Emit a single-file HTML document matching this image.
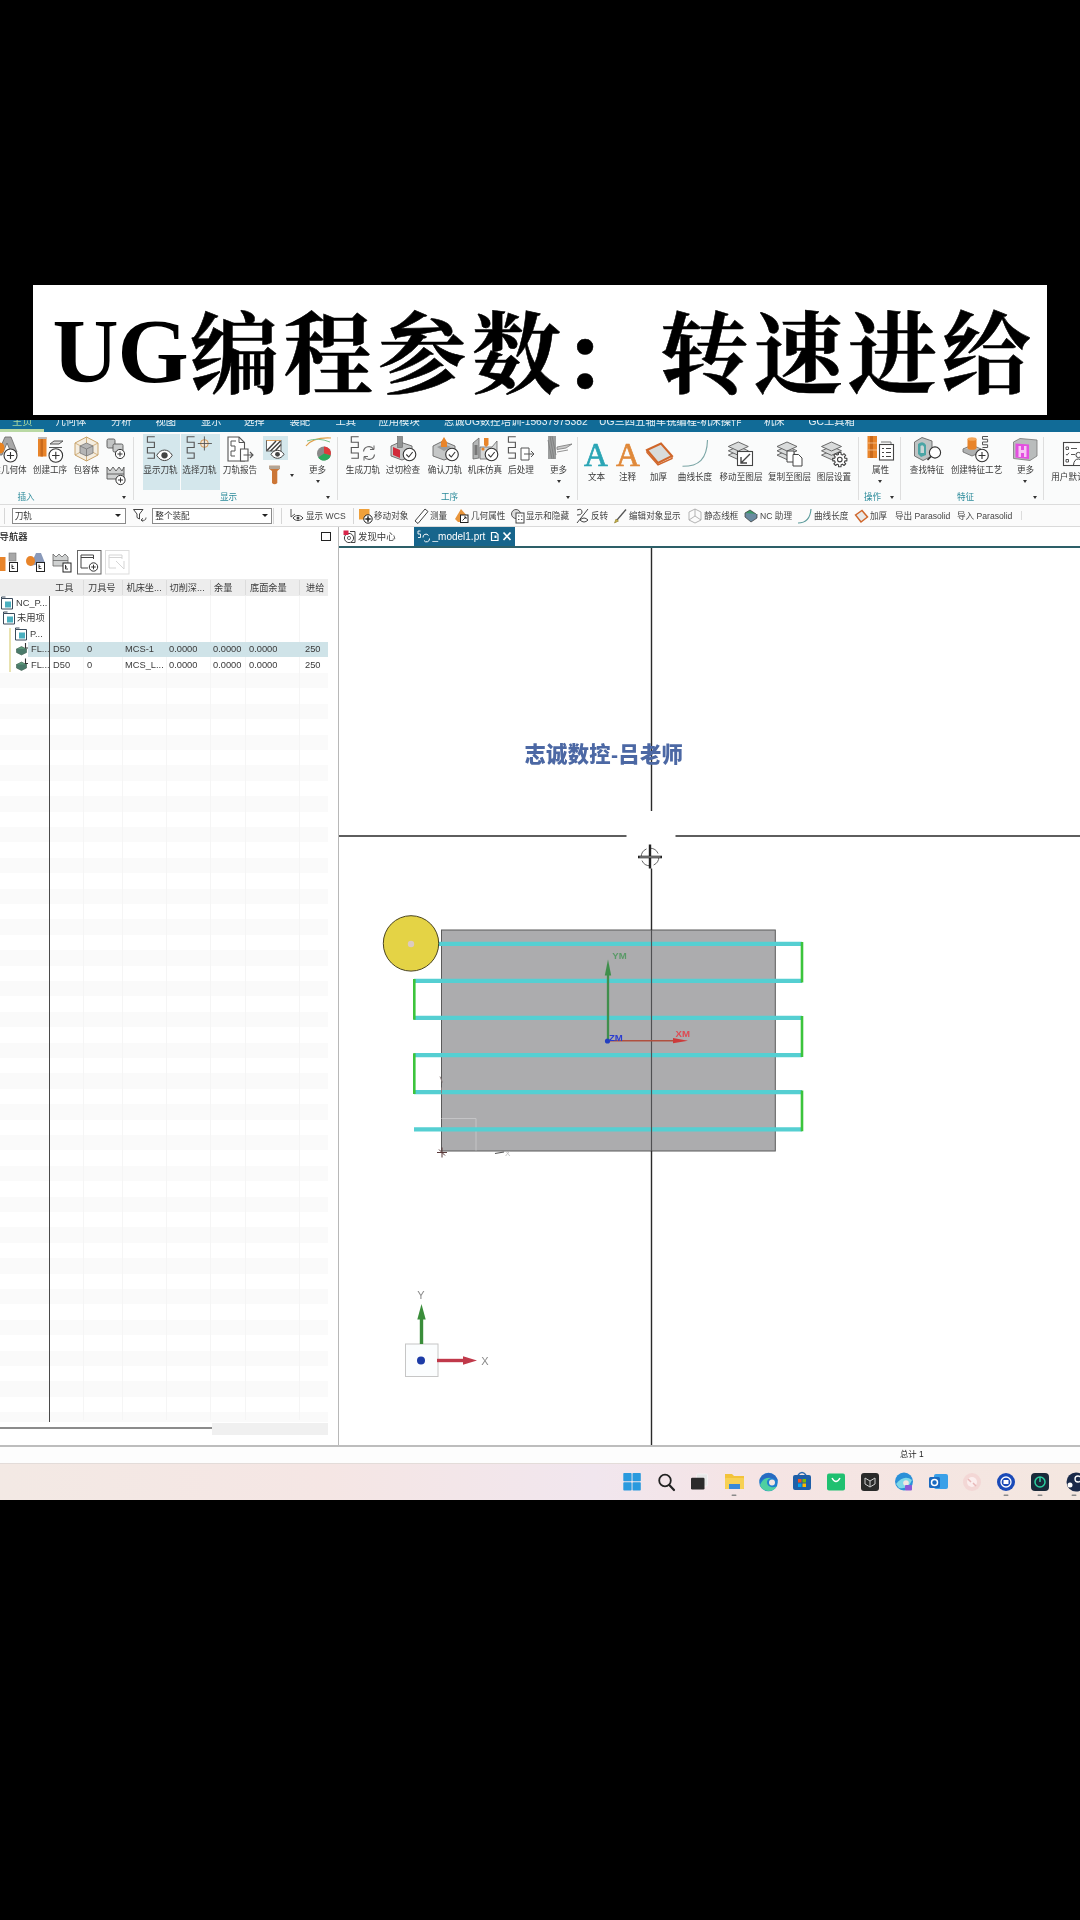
<!DOCTYPE html><html lang="zh"><head><meta charset="utf-8"><title>UG编程参数：转速进给</title><style>
html,body{margin:0;padding:0;background:#000;}
body{width:1080px;height:1920px;position:relative;overflow:hidden;font-family:"Liberation Sans","Noto Sans CJK SC",sans-serif;color:#333;}
.a{position:absolute;white-space:nowrap;}
#title{position:absolute;left:33px;top:285px;width:1014px;height:129.5px;background:#fff;}
#tt{position:absolute;left:0;top:0;white-space:nowrap;color:#000;}
#tt .l{font-family:"Liberation Serif",serif;font-weight:700;}
#tt .c{font-family:"Noto Serif CJK SC",serif;font-weight:700;-webkit-text-stroke:0.55px #000;}
#ui{position:absolute;left:0;top:420px;width:1080px;height:1080px;background:#fff;overflow:hidden;filter:blur(0.45px);}
#tabs{position:absolute;left:0;top:0;width:1080px;height:12px;background:#116b97;overflow:hidden;}
#tabs span{position:absolute;top:-5.5px;font-size:10.3px;line-height:14px;color:#e8f1f5;white-space:nowrap;}
#ribbon{position:absolute;left:0;top:12px;width:1080px;height:72px;background:#fafbfb;border-bottom:1px solid #dcdcdc;}
.lb{position:absolute;font-size:8.6px;line-height:10px;color:#3a3a3a;white-space:nowrap;transform:translateX(-50%);}
.gl{position:absolute;font-size:8.6px;line-height:10px;color:#2a8a9a;white-space:nowrap;transform:translateX(-50%);}
.sep{position:absolute;width:1px;background:#dedede;}
.arr{position:absolute;width:0;height:0;border-left:2.5px solid transparent;border-right:2.5px solid transparent;border-top:3px solid #333;}
.hl{position:absolute;background:#d4e7ec;}
#tb{position:absolute;left:0;top:85px;width:1080px;height:21px;background:#fbfbfb;border-bottom:1px solid #dadada;}
.tl{position:absolute;font-size:8.6px;line-height:10px;color:#444;white-space:nowrap;top:90.5px;}
.combo{position:absolute;top:2.5px;height:14px;border:1px solid #8a8a8a;background:#fff;font-size:8.6px;line-height:14px;color:#333;padding-left:2px;box-sizing:content-box;}
svg{position:absolute;overflow:visible;}
.nt{position:absolute;font-size:9px;line-height:11px;color:#3a3a3a;white-space:nowrap;}
</style></head><body>
<div id="title"><div id="tt" style="left:19.5px;top:-2.5px;font-size:89px;line-height:129px;letter-spacing:5px"><span class="l" style="font-size:91.5px;letter-spacing:-1px;position:relative;top:-3.2px;margin-right:2px">UG</span><span class="c">编程参数<span style="position:relative;left:-4.5px;top:5px">：</span>转速进给</span></div></div>
<div id="ui">
<div id="tabs">
<div class="a" style="left:0;top:9px;width:44px;height:3px;background:#b9d9a4"></div>
<span style="left:12px;color:#a6d6a0;">主页</span>
<span style="left:55.5px;">几何体</span>
<span style="left:111px;">分析</span>
<span style="left:155.5px;">视图</span>
<span style="left:201px;">显示</span>
<span style="left:244px;">选择</span>
<span style="left:289.5px;">装配</span>
<span style="left:335.5px;">工具</span>
<span style="left:378.5px;">应用模块</span>
<span style="left:444px;">志诚UG数控培训-15637975382</span>
<span style="left:599px;">UG三四五轴车铣编程-机床操作</span>
<span style="left:764px;">机床</span>
<span style="left:808.5px;">GC工具箱</span>
</div>
<div id="ribbon">
<div class="hl" style="left:142.5px;top:2px;width:37.5px;height:56px"></div>
<div class="hl" style="left:181px;top:2px;width:38.5px;height:56px"></div>
<div class="hl" style="left:263px;top:3.5px;width:25px;height:24px"></div>
<div class="sep" style="left:133px;top:5px;height:63px"></div>
<div class="sep" style="left:337px;top:5px;height:63px"></div>
<div class="sep" style="left:577px;top:5px;height:63px"></div>
<div class="sep" style="left:858px;top:5px;height:63px"></div>
<div class="sep" style="left:900px;top:5px;height:63px"></div>
<div class="sep" style="left:1043px;top:5px;height:63px"></div>
<div class="lb" style="left:9.5px;top:33px">建几何体</div>
<div class="lb" style="left:50px;top:33px">创建工序</div>
<div class="lb" style="left:86.5px;top:33px">包容体</div>
<div class="lb" style="left:160.5px;top:33px">显示刀轨</div>
<div class="lb" style="left:199.5px;top:33px">选择刀轨</div>
<div class="lb" style="left:240px;top:33px">刀轨报告</div>
<div class="lb" style="left:317.5px;top:33px">更多</div>
<div class="lb" style="left:363px;top:33px">生成刀轨</div>
<div class="lb" style="left:403px;top:33px">过切检查</div>
<div class="lb" style="left:445px;top:33px">确认刀轨</div>
<div class="lb" style="left:485px;top:33px">机床仿真</div>
<div class="lb" style="left:521px;top:33px">后处理</div>
<div class="lb" style="left:558.5px;top:33px">更多</div>
<div class="lb" style="left:596.5px;top:39.5px">文本</div>
<div class="lb" style="left:627.5px;top:39.5px">注释</div>
<div class="lb" style="left:658.5px;top:39.5px">加厚</div>
<div class="lb" style="left:695px;top:39.5px">曲线长度</div>
<div class="lb" style="left:741px;top:39.5px">移动至图层</div>
<div class="lb" style="left:789.5px;top:39.5px">复制至图层</div>
<div class="lb" style="left:834px;top:39.5px">图层设置</div>
<div class="lb" style="left:880.5px;top:33px">属性</div>
<div class="lb" style="left:927px;top:33px">查找特征</div>
<div class="lb" style="left:976.5px;top:33px">创建特征工艺</div>
<div class="lb" style="left:1025.5px;top:33px">更多</div>
<div class="lb" style="left:1077px;top:39.5px">用户默认设置</div>
<div class="gl" style="left:26px;top:60px">插入</div>
<div class="gl" style="left:228.5px;top:60px">显示</div>
<div class="gl" style="left:449.5px;top:60px">工序</div>
<div class="gl" style="left:872.5px;top:60px">操作</div>
<div class="gl" style="left:965.5px;top:60px">特征</div>
<div class="arr" style="left:121.5px;top:63.5px"></div>
<div class="arr" style="left:289.5px;top:41.5px"></div>
<div class="arr" style="left:315.5px;top:48.0px"></div>
<div class="arr" style="left:325.5px;top:63.5px"></div>
<div class="arr" style="left:556.5px;top:48.0px"></div>
<div class="arr" style="left:565.5px;top:63.5px"></div>
<div class="arr" style="left:878.0px;top:48.0px"></div>
<div class="arr" style="left:889.5px;top:63.5px"></div>
<div class="arr" style="left:1023.0px;top:48.0px"></div>
<div class="arr" style="left:1032.5px;top:63.5px"></div>
<svg style="left:0;top:0" width="1080" height="72" viewBox="0 432 1080 72"><path d="M-3,455 L5,437 L11,437 L17,452 L12,455 L7,443 L2,455 Z" fill="#a8a8a8" stroke="#666" stroke-width="0.8"/><ellipse cx="0" cy="448" rx="4.5" ry="5.5" fill="#e98320"/><circle cx="10.5" cy="455.5" r="6.5" fill="#fff" stroke="#333" stroke-width="1.1"/><path d="M6.925,455.5 H14.075 M10.5,451.925 V459.075" stroke="#333" stroke-width="1.1" fill="none"/><rect x="38" y="437" width="8.5" height="19.5" fill="#e8842a"/><rect x="40.5" y="437" width="2.5" height="19.5" fill="#c96a1c"/><rect x="38" y="437" width="8.5" height="2" fill="#b9b9b9"/><path d="M50,444 L54,441 L63,441 L59,444 Z M49,447.5 L62,447.5" fill="#ddd" stroke="#555" stroke-width="1"/><circle cx="55.8" cy="455.5" r="6.8" fill="#fff" stroke="#333" stroke-width="1.1"/><path d="M52.059999999999995,455.5 H59.54 M55.8,451.76 V459.24" stroke="#333" stroke-width="1.1" fill="none"/><path d="M86.5,437 L98,443 L98,455 L86.5,461 L75,455 L75,443 Z" fill="#f4ede0" stroke="#c9a36a" stroke-width="1"/><path d="M86.5,437 V461 M75,443 L98,455 M98,443 L75,455" stroke="#c9a36a" stroke-width="0.8" fill="none"/><path d="M80,446 L86.5,443 L93,446 L93,453 L86.5,456 L80,453 Z" fill="#b5b5b5" stroke="#777" stroke-width="0.8"/><path d="M80,446 L86.5,449 L93,446 M86.5,449 V456" stroke="#777" stroke-width="0.8" fill="none"/><rect x="107" y="439" width="8" height="9" rx="1.5" fill="#c2c4c4" stroke="#555" stroke-width="0.9"/><rect x="113" y="444" width="10" height="8" rx="1.5" fill="#c9cbcb" stroke="#555" stroke-width="0.9"/><circle cx="120" cy="454" r="4.6" fill="#fff" stroke="#333" stroke-width="1"/><path d="M117.47,454 H122.53 M120,451.47 V456.53" stroke="#333" stroke-width="1" fill="none"/><path d="M107,467 L110,471 L113,467 L116,471 L119,467 L122,471 L124,467 V479 H107 Z" fill="#cfd1d1" stroke="#555" stroke-width="0.9"/><path d="M107,474 H124" stroke="#555" stroke-width="0.9"/><circle cx="120.5" cy="480" r="4.6" fill="#fff" stroke="#333" stroke-width="1"/><path d="M117.97,480 H123.03 M120.5,477.47 V482.53" stroke="#333" stroke-width="1" fill="none"/><path d="M154.8,436.8 H147.4 V442.175 H154.4 V447.55 H147.4 V452.925 H154.4 V458.3 H147.4" stroke="#555" stroke-width="1.1" fill="none"/><path d="M156.75,455.3 C160.625,448.29650000000004 168.375,448.29650000000004 172.25,455.3 C168.375,462.3035 160.625,462.3035 156.75,455.3 Z" fill="#fff" stroke="#444" stroke-width="1"/><circle cx="164.5" cy="455.3" r="3.15" fill="#444"/><path d="M194.6,436.8 H187.2 V442.175 H194.2 V447.55 H187.2 V452.925 H194.2 V458.3 H187.2" stroke="#555" stroke-width="1.1" fill="none"/><circle cx="204.4" cy="443.5" r="3.9" fill="#f3e6d6" stroke="#d49a5a" stroke-width="1"/><path d="M197.800,443.5 H211.900 M204.4,436.400 V450.500" stroke="#555" stroke-width="0.9"/><path d="M228,437 H239 L244.5,442.5 V461 H228 Z" fill="#fff" stroke="#555" stroke-width="1.1"/><path d="M239,437 V442.5 H244.5" fill="none" stroke="#555" stroke-width="1"/><path d="M236,441 H231 V446 H235 V451 H231 V456 H235" fill="none" stroke="#555" stroke-width="1"/><path d="M240.500,449 H248 V461 H240.500 Z" fill="#fff" stroke="#555" stroke-width="1.1"/><path d="M243.500,455 H253 M250,452 L253,455 L250,458" stroke="#555" stroke-width="1.1" fill="none"/><rect x="266.5" y="440.5" width="14.5" height="10.5" fill="#fff" stroke="#555" stroke-width="0.9"/><path d="M266.5,440.5 H281" stroke="#d9a060" stroke-width="1"/><path d="M267,450.500 L276,441 M270.500,451 L280.500,441 M275,451 L281,444.500" stroke="#444" stroke-width="1.5"/><path d="M271.0,454.3 C274.25,448.964 280.75,448.964 284.0,454.3 C280.75,459.636 274.25,459.636 271.0,454.3 Z" fill="#fff" stroke="#444" stroke-width="1"/><circle cx="277.5" cy="454.3" r="2.4" fill="#444"/><path d="M269,465.800 H280 V468.800 L277.300,471 V483 Q274.650,485.500 272,483 V471 L269,468.800 Z" fill="#cc7636"/><rect x="269" y="465.800" width="11" height="3.200" rx="0.800" fill="#b3a596"/><path d="M306,446 Q313,437 331,438" fill="none" stroke="#e0a04a" stroke-width="1.2"/><path d="M307,441 Q318,437 330,442" fill="none" stroke="#7cc08a" stroke-width="1"/><circle cx="324" cy="453.5" r="7" fill="#8a8a8a"/><path d="M324,453.5 L324,446.5 A7,7 0 0 1 330.700,455.600 Z" fill="#e03a3a"/><path d="M324,453.5 L330.700,455.600 A7,7 0 0 1 318.200,457.500 Z" fill="#2aa85a"/><path d="M358.7,436.8 H351.3 V442.175 H358.3 V447.55 H351.3 V452.925 H358.3 V458.3 H351.3" stroke="#555" stroke-width="1.1" fill="none"/><g transform="translate(2,-1.500)"><path d="M361.500,453 A5.500,5.500 0 0 1 371.500,450.5 M372.500,456 A5.500,5.500 0 0 1 362.500,458.5" fill="none" stroke="#666" stroke-width="1.2"/><path d="M372,447 V451 H368 M362,462 V458 H366" fill="none" stroke="#666" stroke-width="1"/></g><path d="M391,446 L400,442 L412,446 L412,456 L402,460 L391,456 Z" fill="#c5c7c7" stroke="#666" stroke-width="0.9"/><path d="M393,447 L400,450 V458 L393,455 Z" fill="#d12a3a"/><rect x="397.5" y="436.5" width="5" height="11" fill="#8f9191" stroke="#666" stroke-width="0.6"/><circle cx="409.5" cy="454.5" r="6.3" fill="#fff" stroke="#333" stroke-width="1.1"/><path d="M406.35,454.5 L408.744,457.02 L412.65,451.98" stroke="#333" stroke-width="1.1" fill="none"/><path d="M433,446 L443,441 L455,446 L455,456 L444,460 L433,456 Z" fill="#c5c7c7" stroke="#666" stroke-width="0.9"/><path d="M437,447 L444,444 L451,447 L444,451 Z" fill="#9a9c9c"/><path d="M441,442 L444,437 L447,442 V447 H441 Z" fill="#e8842a"/><circle cx="452" cy="454.5" r="6.3" fill="#fff" stroke="#333" stroke-width="1.1"/><path d="M448.85,454.5 L451.244,457.02 L455.15,451.98" stroke="#333" stroke-width="1.1" fill="none"/><path d="M473,443 L479,438 L479,458 L473,459 Z" fill="#b5b7b7" stroke="#666" stroke-width="0.8"/><path d="M480,447 H492 L497,441 V456 L492,459 H480 Z" fill="#d4d6d6" stroke="#666" stroke-width="0.8"/><rect x="474.5" y="445" width="3" height="10" fill="#777"/><path d="M484,438 H488.5 V445 L486,447 L484,445 Z" fill="#e8842a"/><circle cx="483" cy="449" r="1.6" fill="#e8842a"/><circle cx="491.5" cy="454.5" r="6.3" fill="#fff" stroke="#333" stroke-width="1.1"/><path d="M488.35,454.5 L490.744,457.02 L494.65,451.98" stroke="#333" stroke-width="1.1" fill="none"/><path d="M515.8,436.8 H508.4 V442.175 H515.4 V447.55 H508.4 V452.925 H515.4 V458.3 H508.4" stroke="#555" stroke-width="1.1" fill="none"/><path d="M521,448 H529 V460 H521 Z" fill="#fff" stroke="#555" stroke-width="1"/><path d="M524,454 H534 M531,451 L534,454 L531,457" fill="none" stroke="#555" stroke-width="1"/><rect x="548" y="436" width="8" height="23" fill="#9b9d9d"/><path d="M550,436 L554,459 M548,440 L552,459 M552,436 L556,455" stroke="#777" stroke-width="0.7"/><path d="M557,447 L572,444 L566,448 L557,449.5 Z M557,452 L568,450" fill="#ccc" stroke="#777" stroke-width="0.8"/><text x="596" y="465.5" font-family="Liberation Serif,serif" font-size="33" fill="#2aa5b5" stroke="#2aa5b5" stroke-width="0.7" text-anchor="middle">A</text><text x="628" y="465.5" font-family="Liberation Serif,serif" font-size="33" fill="#e0893a" stroke="#e0893a" stroke-width="0.7" text-anchor="middle">A</text><path d="M647,450 L661,443.5 L672,456 L658,463 Z" fill="#d8dcdc" stroke="#d0662a" stroke-width="2"/><path d="M647,450 L647,452.5 L658,465 L672,458.5 V456" fill="none" stroke="#d0662a" stroke-width="1.4"/><path d="M682.500,466.3 C699,466.3 707,459 707.5,440" fill="none" stroke="#7aa5a5" stroke-width="1.1"/><path d="M728.3,455.1 L738.3,450.6 L748.3,455.1 L738.3,459.6 Z" fill="#d9dbdb" stroke="#5a5a5a" stroke-width="0.9"/><path d="M728.3,450.8 L738.3,446.3 L748.3,450.8 L738.3,455.3 Z" fill="#d9dbdb" stroke="#5a5a5a" stroke-width="0.9"/><path d="M728.3,446.5 L738.3,442.0 L748.3,446.5 L738.3,451.0 Z" fill="#d9dbdb" stroke="#5a5a5a" stroke-width="0.9"/><rect x="737.5" y="451.5" width="15" height="14" fill="#fff" stroke="#444" stroke-width="1.1"/><path d="M750,454 L741,463 M741,457 V463 H747" fill="none" stroke="#444" stroke-width="1.4"/><path d="M777,455.1 L787.0,450.6 L797,455.1 L787.0,459.6 Z" fill="#d9dbdb" stroke="#5a5a5a" stroke-width="0.9"/><path d="M777,450.8 L787.0,446.3 L797,450.8 L787.0,455.3 Z" fill="#d9dbdb" stroke="#5a5a5a" stroke-width="0.9"/><path d="M777,446.5 L787.0,442.0 L797,446.5 L787.0,451.0 Z" fill="#d9dbdb" stroke="#5a5a5a" stroke-width="0.9"/><path d="M787,451 H794 V462 H787 Z" fill="#fff" stroke="#444" stroke-width="1"/><path d="M793,454.5 H798.5 L802,458 V466 H793 Z" fill="#fff" stroke="#444" stroke-width="1"/><path d="M821.5,455.1 L831.5,450.6 L841.5,455.1 L831.5,459.6 Z" fill="#d9dbdb" stroke="#5a5a5a" stroke-width="0.9"/><path d="M821.5,450.8 L831.5,446.3 L841.5,450.8 L831.5,455.3 Z" fill="#d9dbdb" stroke="#5a5a5a" stroke-width="0.9"/><path d="M821.5,446.5 L831.5,442.0 L841.5,446.5 L831.5,451.0 Z" fill="#d9dbdb" stroke="#5a5a5a" stroke-width="0.9"/><path d="M846.89,458.36 L846.89,460.84 L844.93,460.92 L844.36,462.30 L845.69,463.74 L843.94,465.49 L842.50,464.16 L841.12,464.73 L841.04,466.69 L838.56,466.69 L838.48,464.73 L837.10,464.16 L835.66,465.49 L833.91,463.74 L835.24,462.30 L834.67,460.92 L832.71,460.84 L832.71,458.36 L834.67,458.28 L835.24,456.90 L833.91,455.46 L835.66,453.71 L837.10,455.04 L838.48,454.47 L838.56,452.51 L841.04,452.51 L841.12,454.47 L842.50,455.04 L843.94,453.71 L845.69,455.46 L844.36,456.90 L844.93,458.28 Z" fill="#fff" stroke="#444" stroke-width="1.1" stroke-linejoin="round"/><circle cx="839.8" cy="459.6" r="2.3" fill="#fff" stroke="#444" stroke-width="1.1"/><rect x="867.5" y="436" width="9.5" height="22" fill="#e8842a"/><rect x="870" y="436" width="3" height="22" fill="#c96a1c"/><path d="M867.5,443 H877 M867.5,450 H877" stroke="#f6c79a" stroke-width="0.8"/><path d="M881,442 H891 V445" fill="none" stroke="#666" stroke-width="0.9"/><rect x="879.5" y="444.5" width="14" height="15.5" fill="#fff" stroke="#444" stroke-width="1.1"/><path d="M882,448.5 H884 M886,448.5 H891 M882,452.5 H884 M886,452.5 H891 M882,456.5 H884 M886,456.5 H891" stroke="#444" stroke-width="1.1"/><path d="M914.5,442 L922,437.5 L932,441 L932,456 L923,460.5 L914.5,456 Z" fill="#bfc3c3" stroke="#666" stroke-width="0.9"/><path d="M918,444 Q923,440 926,445 V455 L921,457 L918,454 Z" fill="#4aa5a5"/><path d="M920.5,446 Q923,444 924,447 V453 H920.5 Z" fill="#c9d5d5"/><circle cx="935" cy="452.5" r="5.6" fill="#fff" stroke="#333" stroke-width="1.1"/><path d="M931,456.5 L927.5,460" stroke="#333" stroke-width="1.6"/><path d="M963,449 L972,445 L981,449 L972,453 Z" fill="#c5c7c7" stroke="#666" stroke-width="0.8"/><path d="M963,449 V452 L972,456 L981,452 V449" fill="#aeb0b0" stroke="#666" stroke-width="0.8"/><rect x="967.5" y="439" width="9" height="9" fill="#e8842a"/><ellipse cx="972" cy="439" rx="4.5" ry="1.8" fill="#f2a65a"/><ellipse cx="972" cy="448" rx="4.5" ry="1.8" fill="#e8842a"/><path d="M988.0,436.5 H982.5 V439.25 H987.6 V442.0 H982.5 V444.75 H987.6 V447.5 H982.5" stroke="#555" stroke-width="1" fill="none"/><circle cx="982" cy="455.5" r="6.3" fill="#fff" stroke="#333" stroke-width="1.1"/><path d="M978.535,455.5 H985.465 M982,452.035 V458.965" stroke="#333" stroke-width="1.1" fill="none"/><path d="M1013.5,442 L1020,438.5 L1037,440 L1037,456 L1030,460.5 L1013.5,458.5 Z" fill="#b9bcbc" stroke="#777" stroke-width="0.8"/><path d="M1015.5,443.5 L1029,444.5 V459 L1015.5,457.5 Z" fill="#e34fe0"/><path d="M1018.5,446 H1021 V450 H1024 V446 H1026.5 V457 H1024 V453 H1021 V457 H1018.5 Z" fill="#f7c6f5"/><rect x="1063.5" y="442.5" width="20" height="23" fill="#fff" stroke="#444" stroke-width="1.1"/><path d="M1066,447 h2.5 v2.5 h-2.5 Z M1071,448.5 H1077 M1066,454 l1,1.2 l2,-2.4 M1071,454.5 H1075 M1066,459.5 h2.5 v2.5 h-2.5 Z" fill="none" stroke="#444" stroke-width="0.9"/><circle cx="1078.5" cy="455" r="2.6" fill="#fff" stroke="#444" stroke-width="1"/><path d="M1073.5,465 Q1074,459 1078.5,459 Q1082,459 1083,465" fill="#fff" stroke="#444" stroke-width="1"/></svg>
</div>
<div id="tb">
<div class="combo" style="left:11.7px;width:110.6px">刀轨</div>
<div class="combo" style="left:152.3px;width:115.3px">整个装配</div>
<div class="arr" style="left:114.5px;top:9px;border-top-color:#222;border-left-width:3.2px;border-right-width:3.2px;border-top-width:3.6px"></div>
<div class="arr" style="left:261.5px;top:9px;border-top-color:#222;border-left-width:3.2px;border-right-width:3.2px;border-top-width:3.6px"></div>
<div class="sep" style="left:4px;top:3px;height:16px;background:#d6d6d6"></div>
<div class="sep" style="left:273px;top:3px;height:16px;background:#d6d6d6"></div>
<div class="sep" style="left:281px;top:3px;height:16px;background:#d6d6d6"></div>
<div class="sep" style="left:352.5px;top:3px;height:16px;background:#d6d6d6"></div>
<div class="sep" style="left:1020.5px;top:6px;height:9px;background:#dcdcdc"></div>
<div class="tl" style="left:306px;top:5.5px">显示 WCS</div>
<div class="tl" style="left:374px;top:5.5px">移动对象</div>
<div class="tl" style="left:430px;top:5.5px">测量</div>
<div class="tl" style="left:471px;top:5.5px">几何属性</div>
<div class="tl" style="left:526px;top:5.5px">显示和隐藏</div>
<div class="tl" style="left:591px;top:5.5px">反转</div>
<div class="tl" style="left:629px;top:5.5px">编辑对象显示</div>
<div class="tl" style="left:704px;top:5.5px">静态线框</div>
<div class="tl" style="left:760px;top:5.5px">NC 助理</div>
<div class="tl" style="left:814px;top:5.5px">曲线长度</div>
<div class="tl" style="left:870px;top:5.5px">加厚</div>
<div class="tl" style="left:895px;top:5.5px">导出 Parasolid</div>
<div class="tl" style="left:957px;top:5.5px">导入 Parasolid</div>
<svg style="left:0;top:0" width="1080" height="22" viewBox="0 505 1080 22"><path d="M133.5,509.5 H143 L139.5,514 V519 L137,517.5 V514 Z" fill="#fff" stroke="#444" stroke-width="1"/><path d="M141,520 Q146,521.5 146,517.5 M141,520 l2,-1.8 M141,520 l2.2,1.6" fill="none" stroke="#444" stroke-width="0.9"/><path d="M291,509 V517 M291,517 L295,514" stroke="#444" stroke-width="0.9" fill="none"/><path d="M293.0,518 C295.5,514.665 300.5,514.665 303.0,518 C300.5,521.335 295.5,521.335 293.0,518 Z" fill="#fff" stroke="#444" stroke-width="1"/><circle cx="298" cy="518" r="1.5" fill="#444"/><rect x="359" y="509" width="10.5" height="10.5" fill="#efa03a"/><circle cx="368" cy="519" r="4.2" fill="#fff" stroke="#222" stroke-width="1"/><path d="M365.3,519 H370.7 M368,516.3 V521.7" stroke="#222" stroke-width="1.5"/><path d="M415,521 L425,509 L428,511.5 L418,523.5 Z" fill="#fff" stroke="#444" stroke-width="1"/><path d="M455,519 L461,509 L468,517 L465,522 H458 Z" fill="#e8943a"/><rect x="460.5" y="515" width="7.5" height="7.5" fill="#fff" stroke="#222" stroke-width="1"/><path d="M462.5,520.5 L466,517 M464,517 H466 V519" stroke="#222" stroke-width="0.9" fill="none"/><circle cx="516" cy="514" r="4.5" fill="#ddd" stroke="#444" stroke-width="0.9"/><rect x="516" y="513" width="8" height="10" fill="#fff" stroke="#444" stroke-width="1"/><path d="M518,516 h1.4 M521,516 h1.4 M518,519.5 h1.4 M521,519.5 h1.4" stroke="#444" stroke-width="1.2"/><path d="M577,510 Q582,508 582,512 Q582,515 577,515 M577,523 L588,509 M580,520 Q584,516 588,520 Q584,524 580,520" fill="none" stroke="#444" stroke-width="1"/><path d="M617,520 L626,509.5" stroke="#555" stroke-width="1.3"/><path d="M614.5,523 L616,519 L618.5,521 Z" fill="#c9b44a" stroke="#8a7a2a" stroke-width="0.6"/><path d="M695,509 L701,512 V520 L695,523 L689,520 V512 Z M695,509 V516 M689,520 L695,516 L701,520" fill="none" stroke="#aaa" stroke-width="0.9"/><path d="M745,513 L750,510 L756,514 L751,518 Z" fill="#3a9a6a" stroke="#333" stroke-width="0.7"/><path d="M745,513 V517 L751,522 L757,518 V514" fill="#6a8aa0" stroke="#333" stroke-width="0.7"/><path d="M798,523 Q810,523 811,509" fill="none" stroke="#5a9a9a" stroke-width="1.1"/><path d="M855.5,515 L862,510.5 L867.5,517 L861,522 Z" fill="#e8e8e8" stroke="#d0662a" stroke-width="1.5"/></svg>
</div>
<div class="a" style="left:0;top:107px;width:1080px;height:20px;background:#fff"></div>
<div class="a" style="left:338px;top:107px;width:1px;height:920px;background:#b8b8b8"></div>
<div class="a" style="left:413.5px;top:106.5px;width:101.5px;height:20px;background:#17658c"></div>
<div class="a" style="left:339px;top:126px;width:741px;height:1.8px;background:#2d5f68"></div>
<div class="nt" style="left:358px;top:110.5px;font-size:9.4px">发现中心</div>
<div class="nt" style="left:432.5px;top:110.5px;color:#fff;font-size:10px">_model1.prt</div>
<svg style="left:0;top:107px" width="1080" height="20" viewBox="0 527 1080 20"><circle cx="349" cy="538" r="4.6" fill="#fff" stroke="#444" stroke-width="1"/><circle cx="349" cy="538" r="1.6" fill="none" stroke="#444" stroke-width="0.8"/><path d="M350,531.5 H355 V542.5 H351" fill="none" stroke="#444" stroke-width="1"/><rect x="343.5" y="530.5" width="5" height="4.5" fill="#d8264a"/><path d="M420.5,531 H418 V534 H420.5 V537.5 H418" fill="none" stroke="#fff" stroke-width="0.9"/><path d="M423,537.5 A3,3 0 0 1 428.5,535.5 M429.5,538.5 A3,3 0 0 1 424,540.5" fill="none" stroke="#fff" stroke-width="1"/><path d="M491.5,532.5 H496 L498,534.5 V540.5 H491.5 Z" fill="none" stroke="#fff" stroke-width="1.2"/><rect x="494.5" y="535.5" width="2" height="2.5" fill="#fff"/><path d="M503.5,532.5 L510.5,540 M510.5,532.5 L503.5,540" stroke="#fff" stroke-width="1.7"/></svg>
<div class="nt" style="left:-0.5px;top:110.5px;font-size:9.4px;color:#222;font-weight:500;">导航器</div>
<div class="a" style="left:320.5px;top:112px;width:8px;height:6.5px;border:1.2px solid #222"></div>
<svg style="left:0;top:130px" width="340" height="26" viewBox="0 550 340 26"><rect x="-1" y="557" width="6.5" height="14" fill="#e8842a"/><rect x="9" y="553" width="7" height="8" fill="#a8a8a8" stroke="#777" stroke-width="0.6"/><rect x="9.5" y="562.5" width="8" height="9" fill="#fff" stroke="#222" stroke-width="1"/><path d="M12.0,564.5 v4 h2.5 M12.0,566.5 h1.5" stroke="#222" stroke-width="0.9" fill="none"/><path d="M30,566 L36,553 L41,553 L45,563 Z" fill="#8a9aba"/><ellipse cx="30.5" cy="561" rx="4.5" ry="5" fill="#e8842a"/><rect x="36.5" y="562.5" width="8" height="9" fill="#fff" stroke="#222" stroke-width="1"/><path d="M39.0,564.5 v4 h2.5 M39.0,566.5 h1.5" stroke="#222" stroke-width="0.9" fill="none"/><path d="M53,554 L56,557 L59,554 L62,557 L65,554 L68,557 V566 H53 Z" fill="#cfd1d1" stroke="#666" stroke-width="0.8"/><path d="M53,560.5 H68" stroke="#666" stroke-width="0.8"/><rect x="63" y="563" width="8" height="9" fill="#fff" stroke="#222" stroke-width="1"/><path d="M65.5,565 v4 h2.5 M65.5,567 h1.5" stroke="#222" stroke-width="0.9" fill="none"/><rect x="77.5" y="550.5" width="23.5" height="23.5" fill="#fff" stroke="#666" stroke-width="1"/><path d="M81,555 H93.5 V559 M81,555 V568 H88 M81,557.5 H93.5" fill="none" stroke="#444" stroke-width="1"/><circle cx="93.5" cy="567" r="4.2" fill="#fff" stroke="#333" stroke-width="1"/><path d="M91.19,567 H95.81 M93.5,564.69 V569.31" stroke="#333" stroke-width="1" fill="none"/><rect x="105.500" y="550.5" width="23.5" height="23.5" fill="#fff" stroke="#ddd" stroke-width="1"/><path d="M109,555 H122 V559 M109,555 V568 H116 M109,557.5 H122 M116,561 L124,569 M124,561 V569" fill="none" stroke="#d5d5d5" stroke-width="1"/></svg>
<div class="a" style="left:0;top:159px;width:327.5px;height:17px;background:#ededed"></div>
<div class="nt" style="left:55px;top:162.5px;font-size:9.2px;">工具</div>
<div class="nt" style="left:88px;top:162.5px;font-size:9.2px;">刀具号</div>
<div class="nt" style="left:126.5px;top:162.5px;font-size:9.2px;">机床坐...</div>
<div class="nt" style="left:169.5px;top:162.5px;font-size:9.2px;">切削深...</div>
<div class="nt" style="left:214px;top:162.5px;font-size:9.2px;">余量</div>
<div class="nt" style="left:250px;top:162.5px;font-size:9.2px;">底面余量</div>
<div class="nt" style="left:306px;top:162.5px;font-size:9.2px;">进给</div>
<div class="a" style="left:83px;top:160px;width:1px;height:15px;background:#dcdcdc"></div>
<div class="a" style="left:121.5px;top:160px;width:1px;height:15px;background:#dcdcdc"></div>
<div class="a" style="left:166px;top:160px;width:1px;height:15px;background:#dcdcdc"></div>
<div class="a" style="left:210px;top:160px;width:1px;height:15px;background:#dcdcdc"></div>
<div class="a" style="left:245px;top:160px;width:1px;height:15px;background:#dcdcdc"></div>
<div class="a" style="left:299px;top:160px;width:1px;height:15px;background:#dcdcdc"></div>
<div class="a" style="left:0;top:253.0px;width:327.5px;height:15.4px;background:#fafafa"></div><div class="a" style="left:0;top:283.8px;width:327.5px;height:15.4px;background:#fafafa"></div><div class="a" style="left:0;top:314.6px;width:327.5px;height:15.4px;background:#fafafa"></div><div class="a" style="left:0;top:345.4px;width:327.5px;height:15.4px;background:#fafafa"></div><div class="a" style="left:0;top:376.2px;width:327.5px;height:15.4px;background:#fafafa"></div><div class="a" style="left:0;top:407.0px;width:327.5px;height:15.4px;background:#fafafa"></div><div class="a" style="left:0;top:437.8px;width:327.5px;height:15.4px;background:#fafafa"></div><div class="a" style="left:0;top:468.6px;width:327.5px;height:15.4px;background:#fafafa"></div><div class="a" style="left:0;top:499.4px;width:327.5px;height:15.4px;background:#fafafa"></div><div class="a" style="left:0;top:530.2px;width:327.5px;height:15.4px;background:#fafafa"></div><div class="a" style="left:0;top:561.0px;width:327.5px;height:15.4px;background:#fafafa"></div><div class="a" style="left:0;top:591.8px;width:327.5px;height:15.4px;background:#fafafa"></div><div class="a" style="left:0;top:622.6px;width:327.5px;height:15.4px;background:#fafafa"></div><div class="a" style="left:0;top:653.4px;width:327.5px;height:15.4px;background:#fafafa"></div><div class="a" style="left:0;top:684.2px;width:327.5px;height:15.4px;background:#fafafa"></div><div class="a" style="left:0;top:715.0px;width:327.5px;height:15.4px;background:#fafafa"></div><div class="a" style="left:0;top:745.8px;width:327.5px;height:15.4px;background:#fafafa"></div><div class="a" style="left:0;top:776.6px;width:327.5px;height:15.4px;background:#fafafa"></div><div class="a" style="left:0;top:807.4px;width:327.5px;height:15.4px;background:#fafafa"></div><div class="a" style="left:0;top:838.2px;width:327.5px;height:15.4px;background:#fafafa"></div><div class="a" style="left:0;top:869.0px;width:327.5px;height:15.4px;background:#fafafa"></div><div class="a" style="left:0;top:899.8px;width:327.5px;height:15.4px;background:#fafafa"></div><div class="a" style="left:0;top:930.6px;width:327.5px;height:15.4px;background:#fafafa"></div><div class="a" style="left:0;top:961.4px;width:327.5px;height:15.4px;background:#fafafa"></div><div class="a" style="left:0;top:992.2px;width:327.5px;height:15.4px;background:#fafafa"></div>
<div class="a" style="left:83px;top:176px;width:1px;height:824px;background:#f5f5f5"></div>
<div class="a" style="left:121.5px;top:176px;width:1px;height:824px;background:#f5f5f5"></div>
<div class="a" style="left:166px;top:176px;width:1px;height:824px;background:#f5f5f5"></div>
<div class="a" style="left:210px;top:176px;width:1px;height:824px;background:#f5f5f5"></div>
<div class="a" style="left:245px;top:176px;width:1px;height:824px;background:#f5f5f5"></div>
<div class="a" style="left:299px;top:176px;width:1px;height:824px;background:#f5f5f5"></div>
<div class="a" style="left:0;top:1002px;width:327.5px;height:14px;background:#fff"></div><div class="a" style="left:212px;top:1003px;width:115.5px;height:12px;background:#f0f0f0"></div>
<div class="a" style="left:0;top:1007.3px;width:211.5px;height:2px;background:#8c8c8c"></div>
<div class="a" style="left:28px;top:222px;width:299.5px;height:14.8px;background:#cfe3e8"></div>
<div class="a" style="left:49.1px;top:176px;width:1.3px;height:826px;background:#4a4a4a"></div>
<div class="a" style="left:9px;top:208px;width:1.5px;height:44px;background:#e8e2b0"></div>
<div class="nt" style="left:16px;top:177.5px;font-size:9.3px">NC_P...</div>
<div class="nt" style="left:17px;top:192.5px;font-size:9.3px">未用项</div>
<div class="nt" style="left:30px;top:208.5px;font-size:9.3px">P...</div>
<div class="nt" style="left:31px;top:224.0px;font-size:9.3px">FL...</div>
<div class="nt" style="left:53px;top:224.0px;font-size:9.3px">D50</div>
<div class="nt" style="left:87px;top:224.0px;font-size:9.3px">0</div>
<div class="nt" style="left:125px;top:224.0px;font-size:9.3px">MCS-1</div>
<div class="nt" style="left:169px;top:224.0px;font-size:9.3px">0.0000</div>
<div class="nt" style="left:213px;top:224.0px;font-size:9.3px">0.0000</div>
<div class="nt" style="left:249px;top:224.0px;font-size:9.3px">0.0000</div>
<div class="nt" style="left:305px;top:224.0px;font-size:9.3px">250</div>
<div class="nt" style="left:31px;top:239.5px;font-size:9.3px">FL...</div>
<div class="nt" style="left:53px;top:239.5px;font-size:9.3px">D50</div>
<div class="nt" style="left:87px;top:239.5px;font-size:9.3px">0</div>
<div class="nt" style="left:125px;top:239.5px;font-size:9.3px">MCS_L...</div>
<div class="nt" style="left:169px;top:239.5px;font-size:9.3px">0.0000</div>
<div class="nt" style="left:213px;top:239.5px;font-size:9.3px">0.0000</div>
<div class="nt" style="left:249px;top:239.5px;font-size:9.3px">0.0000</div>
<div class="nt" style="left:305px;top:239.5px;font-size:9.3px">250</div>
<svg style="left:0;top:175px" width="60" height="80" viewBox="0 595 60 80"><path d="M1.5,598.5 H12.5 V609.0 H1.5 Z" fill="#fff" stroke="#3a4a5a" stroke-width="1"/><rect x="5.0" y="601.5" width="6" height="6" fill="#4ab0c0"/><path d="M1.5,598.5 V597.0 H5.5" fill="none" stroke="#3a4a5a" stroke-width="1"/><path d="M3.5,613.5 H14.5 V624.0 H3.5 Z" fill="#fff" stroke="#3a4a5a" stroke-width="1"/><rect x="7.0" y="616.5" width="6" height="6" fill="#4ab0c0"/><path d="M3.5,613.5 V612.0 H7.5" fill="none" stroke="#3a4a5a" stroke-width="1"/><path d="M15.5,629.5 H26.5 V640.0 H15.5 Z" fill="#fff" stroke="#3a4a5a" stroke-width="1"/><rect x="19.0" y="632.5" width="6" height="6" fill="#4ab0c0"/><path d="M15.5,629.5 V628.0 H19.5" fill="none" stroke="#3a4a5a" stroke-width="1"/><path d="M16.5,649 L21.5,646.5 L26.5,649 L21.5,651.5 Z" fill="#5a9a7a" stroke="#3a5a4a" stroke-width="0.6"/><path d="M16.5,649 V652.5 L21.5,655 L26.5,652.5 V649" fill="#4a7a6a" stroke="#3a5a4a" stroke-width="0.6"/><path d="M25.5,643 V648 H28.0" fill="none" stroke="#333" stroke-width="1.1"/><path d="M16.5,664.5 L21.5,662.0 L26.5,664.5 L21.5,667.0 Z" fill="#5a9a7a" stroke="#3a5a4a" stroke-width="0.6"/><path d="M16.5,664.5 V668.0 L21.5,670.5 L26.5,668.0 V664.5" fill="#4a7a6a" stroke="#3a5a4a" stroke-width="0.6"/><path d="M25.5,658.5 V663.5 H28.0" fill="none" stroke="#333" stroke-width="1.1"/></svg>
<svg style="left:339px;top:127.5px" width="741" height="898" viewBox="339 547.5 741 898"><circle cx="650" cy="856.5" r="8.8" fill="none" stroke="#555" stroke-width="0.9" stroke-dasharray="10 3.8"/><path d="M650,844 V868" stroke="#222" stroke-width="2.4"/><path d="M638,856.5 H662" stroke="#222" stroke-width="2.6"/><path d="M639.5,856.5 H660.5" stroke="#bbb" stroke-width="0.9"/><rect x="441.5" y="929.5" width="333.800" height="221" fill="#acacae" stroke="#5a5a5a" stroke-width="1"/><path d="M441.5,1118 H476 V1150" fill="none" stroke="#c4c4c6" stroke-width="1"/><path d="M438,943.3 H802" stroke="#55cfd2" stroke-width="4.2"/><path d="M414,980.3 H802" stroke="#55cfd2" stroke-width="4.2"/><path d="M414,1017.4 H802" stroke="#55cfd2" stroke-width="4.2"/><path d="M414,1054.6 H802" stroke="#55cfd2" stroke-width="4.2"/><path d="M414,1091.7 H802" stroke="#55cfd2" stroke-width="4.2"/><path d="M414,1128.9 H802" stroke="#55cfd2" stroke-width="4.2"/><path d="M802,941.5 V982.0999999999999 M802,1015.6 V1056.3999999999999 M802,1089.9 V1130.7" stroke="#3cc43c" stroke-width="2.6"/><path d="M414.3,978.5 V1019.1999999999999 M414.3,1052.8 V1093.5" stroke="#3cc43c" stroke-width="2.6"/><circle cx="411" cy="942.9" r="27.7" fill="#e4d345" stroke="#4a4420" stroke-width="1"/><circle cx="411" cy="943.5" r="3.2" fill="#dccbc0"/><path d="M651.5,547.5 V810.5 M651.5,868 V929.5 M651.5,1150.5 V1445.5" stroke="#2a2a2a" stroke-width="1.4" fill="none"/><path d="M651.5,929.5 V1150.5" stroke="#505052" stroke-width="1.15" fill="none"/><path d="M339,835.5 H626.5 M675.5,835.5 H1080" stroke="#2a2a2a" stroke-width="1.45" fill="none"/><path d="M608,1040 V970" stroke="#3f8f4c" stroke-width="2.3"/><path d="M608,959 L604.800,975 H611.200 Z" fill="#3f8f4c"/><path d="M608,1040.200 H676" stroke="#b0503f" stroke-width="1.4"/><path d="M688,1040.200 L673,1037.600 V1042.800 Z" fill="#cc3a3a"/><circle cx="607.500" cy="1040.5" r="2.6" fill="#2340c0"/><text x="612.3" y="958.8" font-family="Liberation Sans,sans-serif" font-size="9.6" font-weight="700" fill="#5a9a68">YM</text><text x="675.5" y="1036.500" font-family="Liberation Sans,sans-serif" font-size="9.6" font-weight="700" fill="#de4a52">XM</text><text x="609" y="1040" font-family="Liberation Sans,sans-serif" font-size="9.6" font-weight="700" fill="#2a3cd0">ZM</text><path d="M437,1152 H447 M442,1147 V1157 M439,1149 L445,1155" stroke="#5a3a3a" stroke-width="1"/><path d="M495,1153 L504,1151.5" stroke="#555" stroke-width="1.2"/><text x="505" y="1155.500" font-family="Liberation Sans,sans-serif" font-size="8" fill="#bbb">X</text><path d="M440,1076 l2.5,6 M441.500,1087 v6" stroke="#8a7a7a" stroke-width="0.9"/><rect x="405.500" y="1343.5" width="32.5" height="32.5" fill="#fbfdfe" stroke="#c6c6c6" stroke-width="1"/><circle cx="421" cy="1360" r="4" fill="#1b3aa6"/><path d="M421.5,1343.5 V1316" stroke="#3a8d3a" stroke-width="3.4"/><path d="M421.5,1303.5 L417.300,1319 H425.700 Z" fill="#3a8d3a"/><path d="M437,1360 H464" stroke="#c0394a" stroke-width="3.4"/><path d="M477,1360 L463,1355.800 V1364.200 Z" fill="#c0394a"/><text x="421" y="1298.500" text-anchor="middle" font-family="Liberation Sans,sans-serif" font-size="11" fill="#8a8a8a">Y</text><text x="485" y="1364" text-anchor="middle" font-family="Liberation Sans,sans-serif" font-size="11" fill="#8a8a8a">X</text></svg>
<div class="a" style="left:524.5px;top:322px;font-size:21.3px;line-height:26px;font-weight:900;color:#4c68a4;letter-spacing:0.3px">志诚数控-吕老师</div>
<div class="a" style="left:0;top:1025px;width:1080px;height:1.5px;background:#bdbdbd"></div>
<div class="a" style="left:0;top:1026.5px;width:1080px;height:17px;background:#fdfdfd"></div>
<div class="nt" style="left:900px;top:1029px;font-size:8.4px;color:#222">总计 1</div>
<div class="a" style="left:0;top:1043px;width:1080px;height:37px;background:linear-gradient(90deg,#f3e9e4 0%,#f5e6e4 30%,#f1e6ee 55%,#f5e4e4 70%,#f4e7e0 100%);border-top:1px solid #e3dcd9;box-sizing:border-box"></div>
<svg style="left:0;top:1043px" width="1080" height="37" viewBox="0 1463 1080 37"><rect x="623.3" y="1473" width="8.3" height="8.3" rx="0.8" fill="#2a9ade"/><rect x="632.5" y="1473" width="8.3" height="8.3" rx="0.8" fill="#2a9ade"/><rect x="623.3" y="1482.2" width="8.3" height="8.3" rx="0.8" fill="#2a9ade"/><rect x="632.5" y="1482.2" width="8.3" height="8.3" rx="0.8" fill="#2a9ade"/><circle cx="665" cy="1480.500" r="5.8" fill="none" stroke="#222" stroke-width="1.8"/><path d="M669.300,1485 L674,1490" stroke="#222" stroke-width="2.2" stroke-linecap="round"/><rect x="696.5" y="1474" width="11" height="12" rx="1.2" fill="#e6e6e6" stroke="#fafafa" stroke-width="0.6"/><rect x="691" y="1477.800" width="13.5" height="11.7" rx="1.2" fill="#2b2b2b"/><path d="M725,1474 H732 L734,1476 H744 V1489 H725 Z" fill="#f3c33a"/><rect x="725" y="1478" width="19" height="11" rx="1" fill="#f7d154"/><rect x="729" y="1484" width="11" height="5" fill="#3a8ad8"/><rect x="731.500" y="1494.500" width="5" height="1.500" rx="0.7" fill="#8a8a8a"/><circle cx="768.500" cy="1482" r="9.300" fill="#1f7fd0"/><path d="M760,1485 A9.300,9.300 0 0 0 777,1486 A6,5 0 0 1 767,1482 Q767,1479 771,1478 Q764,1476 760,1485 Z" fill="#4fd0a0"/><circle cx="772" cy="1482.500" r="3" fill="#f3e6e2"/><path d="M759.500,1481 A9.300,9.300 0 0 1 777.800,1481 Q770,1474 759.500,1481" fill="#2a6ac0"/><path d="M798,1475 Q802,1470 806,1475" fill="none" stroke="#2a6ab0" stroke-width="1.300"/><rect x="793" y="1475" width="18" height="15" rx="2" fill="#1f5fa8"/><rect x="798" y="1479" width="3.500" height="3.500" fill="#f25022"/><rect x="802.500" y="1479" width="3.500" height="3.500" fill="#7fba00"/><rect x="798" y="1483.500" width="3.500" height="3.500" fill="#00a4ef"/><rect x="802.500" y="1483.500" width="3.500" height="3.500" fill="#ffb900"/><rect x="827" y="1473.500" width="18" height="17" rx="2" fill="#1fc070"/><path d="M832,1478 Q836,1485 840,1478" fill="none" stroke="#fff" stroke-width="1.500"/><rect x="861" y="1473" width="18" height="18" rx="3" fill="#2a2a2a"/><path d="M865,1478 L870,1481 L875,1478 M870,1481 V1487 M865,1478 V1484 L870,1487 L875,1484 V1478" fill="none" stroke="#ccc" stroke-width="1"/><circle cx="904" cy="1481.500" r="9" fill="#2a90d8"/><path d="M896,1484 Q904,1474 912,1480 Q908,1490 899,1488 Z" fill="#7fd8e8"/><circle cx="906" cy="1483" r="2.800" fill="#f3e6e2"/><rect x="905" y="1485" width="7" height="5.500" rx="1" fill="#8a5ad8"/><rect x="934" y="1474" width="14" height="15" rx="2" fill="#3aa0e8"/><rect x="929" y="1477" width="11" height="11" rx="1.500" fill="#1a6ac0"/><circle cx="934.500" cy="1482.500" r="3" fill="none" stroke="#fff" stroke-width="1.500"/><circle cx="972" cy="1482" r="9" fill="#f2d0d0" opacity="0.7"/><circle cx="972" cy="1482" r="5" fill="#fbeeee"/><path d="M968,1479 l3,3 M976,1486 l-3,-3" stroke="#e8b8b8" stroke-width="1.500"/><circle cx="1006" cy="1482" r="9" fill="#1a4ab8"/><circle cx="1006" cy="1482" r="5" fill="none" stroke="#fff" stroke-width="1.300"/><rect x="1003.500" y="1480" width="5" height="4" fill="#fff"/><rect x="1003.500" y="1494.500" width="5" height="1.500" rx="0.700" fill="#8a8a8a"/><rect x="1031" y="1473" width="18" height="18" rx="4" fill="#1a2a3a"/><circle cx="1040" cy="1482" r="5" fill="none" stroke="#2ad0a0" stroke-width="1.500"/><path d="M1040,1477 V1482" stroke="#2ad0a0" stroke-width="1.500"/><rect x="1037.500" y="1494.500" width="5" height="1.500" rx="0.700" fill="#8a8a8a"/><circle cx="1076" cy="1482" r="9.500" fill="#1a2a4a"/><circle cx="1078" cy="1479" r="3" fill="none" stroke="#fff" stroke-width="1.300"/><circle cx="1070" cy="1485" r="2.500" fill="#fff"/><rect x="1071.500" y="1494.500" width="5" height="1.500" rx="0.700" fill="#8a8a8a"/></svg>
</div>
</body></html>
